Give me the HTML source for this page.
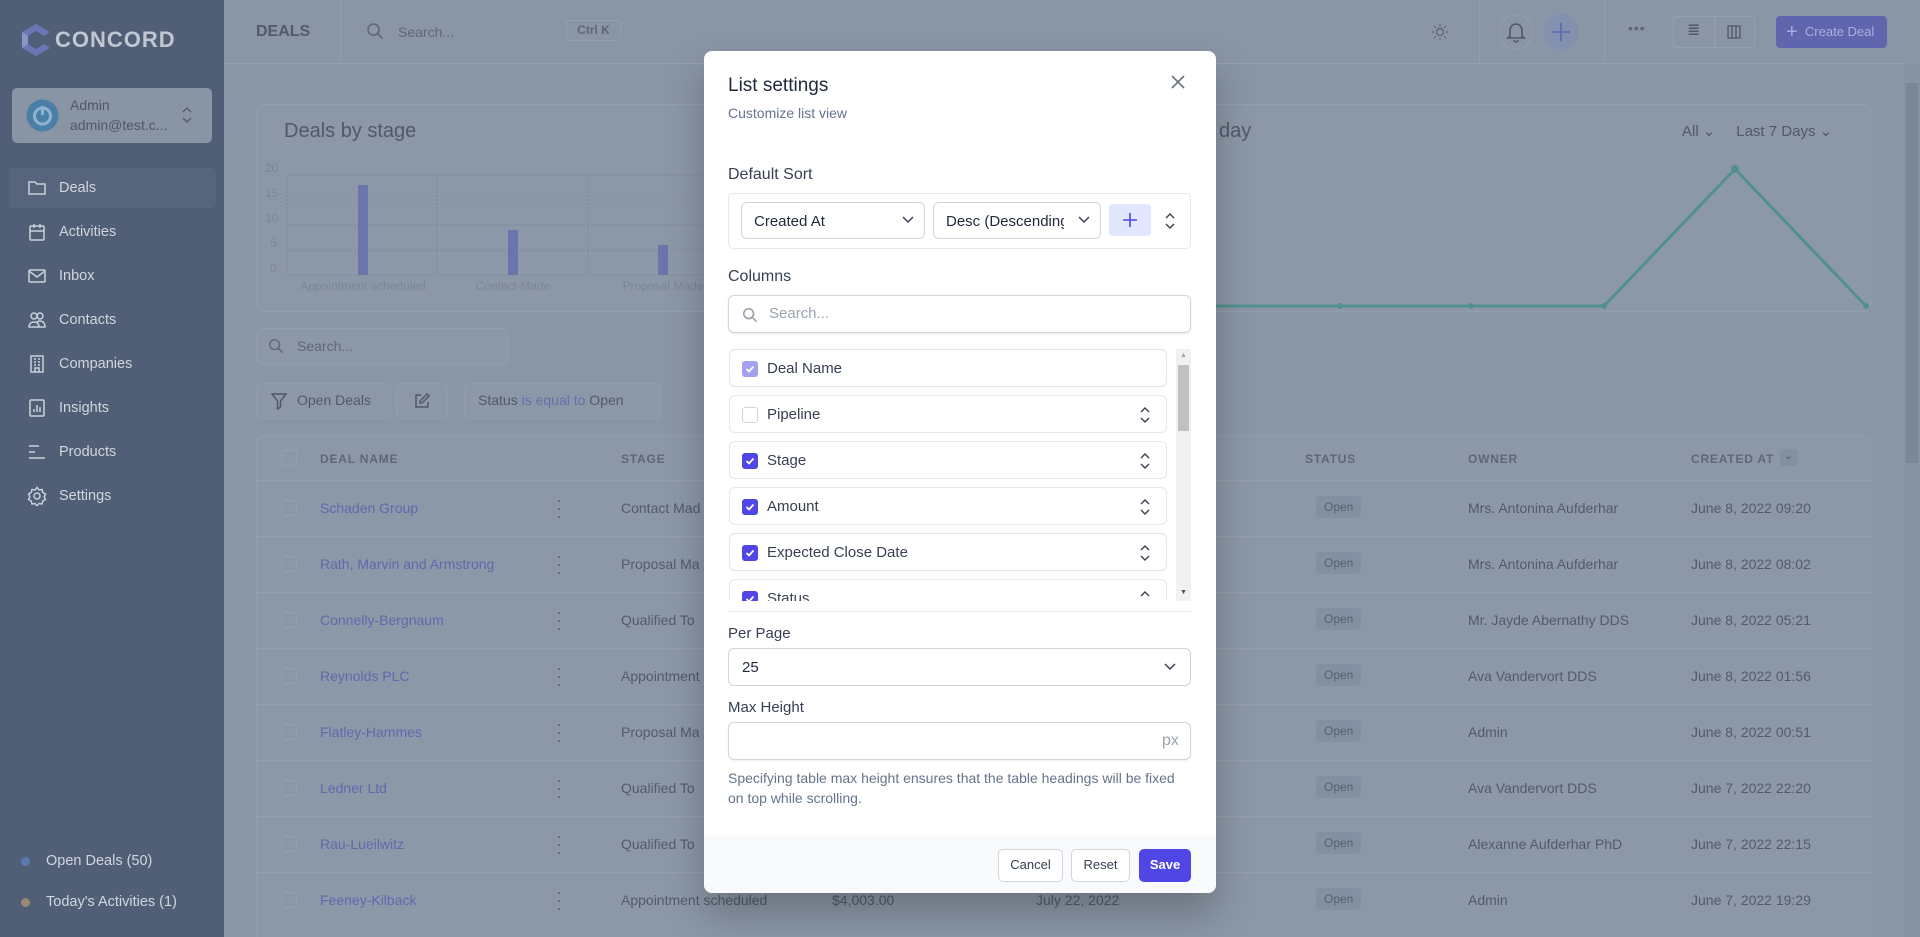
<!DOCTYPE html>
<html style="height:937px;overflow:hidden"><head><meta charset="utf-8">
<style>
*{box-sizing:border-box;margin:0;padding:0}
html,body{width:1920px;height:937px;overflow:hidden}
body{font-family:"Liberation Sans",Arial,sans-serif;background:#8a96a6;position:relative}
.clip{position:absolute;left:0;top:0;width:1920px;height:937px;overflow:hidden}
.a{position:absolute}
.side{left:0;top:0;width:224px;height:937px;background:#505e76}
.nav{left:27px;color:#d1d6de;font-size:14.5px;display:flex;align-items:center;gap:12px;height:22px}
.nav svg{width:20px;height:20px;stroke:#c9d0da;fill:none;stroke-width:1.5}
.top{left:224px;top:0;width:1680px;height:64px;border-bottom:1px solid #95a0af}
.card{background:#8c98a8;border:1px solid #929eae;border-radius:8px}
.row{left:256px;width:1615px;height:56px;border-top:1px solid #95a0af}
.badge{background:#8390a1;color:#565f6e;font-size:12px;padding:4px 8px;border-radius:4px}
.modal{left:704px;top:51px;width:512px;height:842px;background:#fff;border-radius:8px;overflow:hidden;box-shadow:0 20px 40px rgba(0,0,0,.25)}
.m{position:absolute;color:#1f2937}
.lbl{font-size:16px;color:#374151;font-weight:500}
.inp{border:1px solid #d1d5db;border-radius:6px;background:#fff}
.item{left:25px;width:438px;height:38px;border:1px solid #e5e7eb;border-radius:6px;font-size:15px;color:#374151}
.cb{position:absolute;left:12px;top:11px;width:16px;height:16px;border-radius:3px;background:#4f46e5}
.cb svg{position:absolute;left:2px;top:2px}
.ud{position:absolute;right:16px;top:11px}
.btn{border:1px solid #d1d5db;border-radius:5px;background:#fff;font-size:13px;color:#374151;text-align:center;line-height:30px}
.t{font-size:14px;color:#515b6b}
</style></head><body><div class="clip">

<div class="a side"></div>
<svg class="a" style="left:18px;top:22px" width="36" height="36" viewBox="0 0 36 36"><path d="M18 2 L32 10 L26 14 L18 9 L10 14 L10 22 L18 27 L26 22 L32 26 L18 34 L4 26 L4 10Z" fill="#6a76b5"/><path d="M4 10 L10 14 L10 22 L4 26Z" fill="#8b97c9"/></svg>
<div class="a" style="left:55px;top:27px;font-size:22px;font-weight:bold;letter-spacing:1px;color:#c0c7d2">CONCORD</div>
<div class="a" style="left:12px;top:88px;width:200px;height:55px;background:#8995a5;border-radius:5px"></div>
<svg class="a" style="left:26px;top:99px" width="33" height="33" viewBox="0 0 33 33"><circle cx="16.5" cy="16.5" r="16" fill="#4a7fa8"/><circle cx="16.5" cy="17" r="8" fill="none" stroke="#8fb2cf" stroke-width="3"/><line x1="16.5" y1="7" x2="16.5" y2="16" stroke="#8fb2cf" stroke-width="3"/></svg>
<div class="a" style="left:70px;top:97px;font-size:14px;color:#4e5868">Admin</div>
<div class="a" style="left:70px;top:117px;font-size:14px;color:#4e5868">admin@test.c...</div>
<svg class="a" style="left:182px;top:107px" width="10" height="16" viewBox="0 0 10 16" fill="none" stroke="#4e5868" stroke-width="1.3"><path d="M1 5l4-4 4 4M1 11l4 4 4-4"/></svg>
<div class="a" style="left:9px;top:168px;width:207px;height:40px;background:#56647c;border-radius:5px"></div>
<div class="a nav" style="top:177px"><svg viewBox="0 0 20 20"><path d="M2 4h6l2 2h8v10H2z"/></svg>Deals</div>
<div class="a nav" style="top:221px"><svg viewBox="0 0 20 20"><rect x="3" y="4" width="14" height="14" rx="1"/><path d="M7 2v4M13 2v4M3 9h14"/></svg>Activities</div>
<div class="a nav" style="top:265px"><svg viewBox="0 0 20 20"><rect x="2" y="4" width="16" height="12" rx="1"/><path d="M2 5l8 6 8-6"/></svg>Inbox</div>
<div class="a nav" style="top:309px"><svg viewBox="0 0 20 20"><circle cx="7" cy="6" r="3"/><circle cx="13" cy="6" r="3"/><path d="M2 17c0-4 3-5 5-5s5 1 5 5zM10 12c1-1 2-1 3-1 2 0 5 1 5 6h-6"/></svg>Contacts</div>
<div class="a nav" style="top:353px"><svg viewBox="0 0 20 20"><rect x="4" y="2" width="12" height="16"/><path d="M7 5h2M11 5h2M7 8h2M11 8h2M7 11h2M11 11h2M8 18v-4h4v4"/></svg>Companies</div>
<div class="a nav" style="top:397px"><svg viewBox="0 0 20 20"><rect x="3" y="2" width="14" height="16" rx="1"/><path d="M7 14v-3M10 14V7M13 14v-5"/></svg>Insights</div>
<div class="a nav" style="top:441px"><svg viewBox="0 0 20 20"><path d="M2 4h10M2 10h6M2 16h16"/></svg>Products</div>
<div class="a nav" style="top:485px"><svg viewBox="0 0 20 20"><circle cx="10" cy="10" r="3"/><path d="M10 1.5l2 2.5 3-.5.8 3 2.7 1.5-1.3 2.8 1.3 2.7-2.7 1.5-.8 3-3-.5-2 2.5-2-2.5-3 .5-.8-3-2.7-1.5 1.3-2.7L1.5 8l2.7-1.5.8-3 3 .5z"/></svg>Settings</div>
<div class="a" style="left:21px;top:857px;width:9px;height:9px;border-radius:50%;background:#5b78b0"></div>
<div class="a" style="left:46px;top:853px;font-size:14.5px;color:#d1d6de">Open Deals (50)</div>
<div class="a" style="left:21px;top:898px;width:9px;height:9px;border-radius:50%;background:#9a8a73"></div>
<div class="a" style="left:46px;top:894px;font-size:14.5px;color:#d1d6de">Today's Activities (1)</div>

<div class="a top"></div>
<div class="a" style="left:256px;top:23px;font-size:16px;font-weight:bold;color:#515b6b">DEALS</div>
<div class="a" style="left:340px;top:0;width:1px;height:64px;background:#95a0af"></div>
<svg class="a" style="left:366px;top:22px" width="18" height="18" viewBox="0 0 18 18" fill="none" stroke="#5d6777" stroke-width="1.6"><circle cx="7.5" cy="7.5" r="5.5"/><path d="M11.5 11.5l5 5"/></svg>
<div class="a" style="left:398px;top:24px;font-size:14px;color:#5d6777">Search...</div>
<div class="a" style="left:566px;top:20px;width:55px;height:21px;border:1px solid #96a1b0;border-radius:4px;font-size:12px;font-weight:bold;color:#5d6777;text-align:center;line-height:19px">Ctrl K</div>
<svg class="a" style="left:1430px;top:22px" width="20" height="20" viewBox="0 0 20 20" fill="none" stroke="#5d6777" stroke-width="1.4"><circle cx="10" cy="10" r="3.5"/><path d="M10 2v2M10 16v2M2 10h2M16 10h2M4.3 4.3l1.4 1.4M14.3 14.3l1.4 1.4M4.3 15.7l1.4-1.4M14.3 5.7l1.4-1.4"/></svg>
<div class="a" style="left:1479px;top:0;width:1px;height:64px;background:#95a0af"></div>
<div class="a" style="left:1499px;top:14px;width:34px;height:36px;border-radius:50%;border:1px solid #96a1b0"></div>
<svg class="a" style="left:1506px;top:21px" width="20" height="22" viewBox="0 0 20 22" fill="none" stroke="#4f5968" stroke-width="1.6"><path d="M4 15V9a6 6 0 0112 0v6l2 2H2z"/><path d="M8 19a2 2 0 004 0"/></svg>
<div class="a" style="left:1544px;top:14px;width:34px;height:36px;border-radius:50%;background:#8390ae"></div>
<svg class="a" style="left:1551px;top:22px" width="20" height="20" viewBox="0 0 20 20" stroke="#5d67b5" stroke-width="1.6"><path d="M10 1v18M1 10h18"/></svg>
<div class="a" style="left:1604px;top:0;width:1px;height:64px;background:#95a0af"></div>
<div class="a" style="left:1628px;top:20px;font-size:14px;color:#5d6777;letter-spacing:1px">•••</div>
<div class="a" style="left:1673px;top:16px;width:82px;height:32px;border:1px solid #96a1b0;border-radius:4px"></div>
<div class="a" style="left:1714px;top:16px;width:1px;height:32px;background:#96a1b0"></div>
<div class="a" style="left:1687px;top:20px;font-size:16px;color:#4f5968">≣</div>
<svg class="a" style="left:1727px;top:25px" width="14" height="14" viewBox="0 0 14 14" fill="none" stroke="#4f5968" stroke-width="1.3"><rect x="1" y="1" width="12" height="12"/><path d="M5 1v12M9 1v12"/></svg>
<div class="a" style="left:1776px;top:16px;width:111px;height:32px;background:#5f66ad;border-radius:4px;color:#a9aee0;font-size:13px;line-height:32px;padding-left:10px"><span style="font-size:20px;vertical-align:-2px">+</span>&nbsp; Create Deal</div>

<div class="a" style="left:1904px;top:64px;width:16px;height:873px;background:#8793a3"></div>
<div class="a" style="left:1906px;top:83px;width:12px;height:380px;background:#7b8696"></div>

<div class="a card" style="left:256px;top:104px;width:800px;height:208px"></div>
<div class="a card" style="left:1070px;top:104px;width:801px;height:208px"></div>
<div class="a" style="left:284px;top:120px;font-size:20px;color:#4f5968">Deals by stage</div>
<div class="a" style="left:1219px;top:120px;font-size:20px;color:#4f5968">day</div>
<div class="a" style="left:1682px;top:122px;font-size:15px;color:#4f5968">All ⌄&nbsp;&nbsp;&nbsp;&nbsp; Last 7 Days ⌄</div>
<svg class="a" style="left:256px;top:160px" width="460" height="140">
<g stroke="#7d8898" stroke-dasharray="2 2" fill="none"><path d="M31 15H460M31 40H460M31 65H460M31 90H460M31 115H460M31 15V115M181 15V115M332 15V115"/></g>
<g fill="#6a75ad"><rect x="102" y="25" width="10" height="90"/><rect x="252" y="70" width="10" height="45"/><rect x="402" y="85" width="10" height="30"/></g>
<g fill="#7b8696" font-size="12" font-family="Liberation Sans"><text x="9" y="12">20</text><text x="9" y="37">15</text><text x="9" y="62">10</text><text x="14" y="87">5</text><text x="14" y="112">0</text>
<text x="107" y="130" text-anchor="middle">Appointment scheduled</text><text x="257" y="130" text-anchor="middle">Contact Made</text><text x="407" y="130" text-anchor="middle">Proposal Made</text></g></svg>
<svg class="a" style="left:1216px;top:150px" width="660" height="170"><polyline points="0,156 124,156 255,156 388,156 519,19 650,156" fill="none" stroke="#52908e" stroke-width="3"/><g fill="#52908e"><circle cx="124" cy="156" r="3"/><circle cx="255" cy="156" r="3"/><circle cx="388" cy="156" r="3"/><circle cx="519" cy="19" r="4"/><circle cx="650" cy="156" r="3"/></g></svg>

<div class="a card" style="left:256px;top:328px;width:252px;height:37px;border-radius:6px"></div>
<svg class="a" style="left:268px;top:338px" width="16" height="16" viewBox="0 0 18 18" fill="none" stroke="#5d6777" stroke-width="1.6"><circle cx="7.5" cy="7.5" r="5.5"/><path d="M11.5 11.5l5 5"/></svg>
<div class="a" style="left:297px;top:338px;font-size:14px;color:#5d6777">Search...</div>
<div class="a card" style="left:256px;top:383px;width:135px;height:36px;border-radius:6px"></div>
<svg class="a" style="left:270px;top:392px" width="18" height="18" viewBox="0 0 18 18" fill="none" stroke="#4f5968" stroke-width="1.5"><path d="M2 2h14l-5.5 7v6l-3 2V9z"/></svg>
<div class="a" style="left:297px;top:392px;font-size:14px;color:#4f5968">Open Deals</div>
<div class="a card" style="left:396px;top:383px;width:52px;height:36px;border-radius:6px"></div>
<svg class="a" style="left:413px;top:392px" width="18" height="18" viewBox="0 0 18 18" fill="none" stroke="#4f5968" stroke-width="1.5"><path d="M8 3H3v12h12v-5M14 2l2 2-7 7H7V9z"/></svg>
<div class="a card" style="left:464px;top:383px;width:197px;height:36px;border-radius:6px"></div>
<div class="a" style="left:478px;top:392px;font-size:14px;color:#4f5968">Status <span style="color:#6470ad">is equal to</span> Open</div>

<div class="a card" style="left:256px;top:435px;width:1615px;height:520px"></div>
<div class="a" style="left:281px;top:450px;width:16px;height:16px;border:1px solid #96a1b0;border-radius:3px"></div>
<div class="a" style="top:452px;left:320px;font-size:12px;font-weight:bold;letter-spacing:.8px;color:#5d6777">DEAL NAME</div>
<div class="a" style="top:452px;left:621px;font-size:12px;font-weight:bold;letter-spacing:.8px;color:#5d6777">STAGE</div>
<div class="a" style="top:452px;left:1305px;font-size:12px;font-weight:bold;letter-spacing:.8px;color:#5d6777">STATUS</div>
<div class="a" style="top:452px;left:1468px;font-size:12px;font-weight:bold;letter-spacing:.8px;color:#5d6777">OWNER</div>
<div class="a" style="top:452px;left:1691px;font-size:12px;font-weight:bold;letter-spacing:.8px;color:#5d6777">CREATED AT</div>
<div class="a" style="top:449px;left:1780px;width:17px;height:17px;background:#8390a1;border-radius:3px;font-size:11px;color:#4f5968;text-align:center;line-height:15px">⌄</div>

<div class="a row" style="top:480px"></div>
<div class="a row" style="top:536px"></div>
<div class="a row" style="top:592px"></div>
<div class="a row" style="top:648px"></div>
<div class="a row" style="top:704px"></div>
<div class="a row" style="top:760px"></div>
<div class="a row" style="top:816px"></div>
<div class="a row" style="top:872px;height:60px"></div>

<div class="t">
<div class="a" style="left:281px;top:500px;width:16px;height:16px;border:1px solid #96a1b0;border-radius:3px"></div><div class="a" style="left:320px;top:500px;color:#5f68ad">Schaden Group</div><div class="a" style="left:556px;top:496px;font-size:18px;line-height:8px;color:#5d6777">·<br>·<br>·</div><div class="a" style="left:621px;top:500px">Contact Mad</div><div class="a badge" style="left:1316px;top:496px">Open</div><div class="a" style="left:1468px;top:500px">Mrs. Antonina Aufderhar</div><div class="a" style="left:1691px;top:500px">June 8, 2022 09:20</div>
<div class="a" style="left:281px;top:556px;width:16px;height:16px;border:1px solid #96a1b0;border-radius:3px"></div><div class="a" style="left:320px;top:556px;color:#5f68ad">Rath, Marvin and Armstrong</div><div class="a" style="left:556px;top:552px;font-size:18px;line-height:8px;color:#5d6777">·<br>·<br>·</div><div class="a" style="left:621px;top:556px">Proposal Ma</div><div class="a badge" style="left:1316px;top:552px">Open</div><div class="a" style="left:1468px;top:556px">Mrs. Antonina Aufderhar</div><div class="a" style="left:1691px;top:556px">June 8, 2022 08:02</div>
<div class="a" style="left:281px;top:612px;width:16px;height:16px;border:1px solid #96a1b0;border-radius:3px"></div><div class="a" style="left:320px;top:612px;color:#5f68ad">Connelly-Bergnaum</div><div class="a" style="left:556px;top:608px;font-size:18px;line-height:8px;color:#5d6777">·<br>·<br>·</div><div class="a" style="left:621px;top:612px">Qualified To</div><div class="a badge" style="left:1316px;top:608px">Open</div><div class="a" style="left:1468px;top:612px">Mr. Jayde Abernathy DDS</div><div class="a" style="left:1691px;top:612px">June 8, 2022 05:21</div>
<div class="a" style="left:281px;top:668px;width:16px;height:16px;border:1px solid #96a1b0;border-radius:3px"></div><div class="a" style="left:320px;top:668px;color:#5f68ad">Reynolds PLC</div><div class="a" style="left:556px;top:664px;font-size:18px;line-height:8px;color:#5d6777">·<br>·<br>·</div><div class="a" style="left:621px;top:668px">Appointment</div><div class="a badge" style="left:1316px;top:664px">Open</div><div class="a" style="left:1468px;top:668px">Ava Vandervort DDS</div><div class="a" style="left:1691px;top:668px">June 8, 2022 01:56</div>
<div class="a" style="left:281px;top:724px;width:16px;height:16px;border:1px solid #96a1b0;border-radius:3px"></div><div class="a" style="left:320px;top:724px;color:#5f68ad">Flatley-Hammes</div><div class="a" style="left:556px;top:720px;font-size:18px;line-height:8px;color:#5d6777">·<br>·<br>·</div><div class="a" style="left:621px;top:724px">Proposal Ma</div><div class="a badge" style="left:1316px;top:720px">Open</div><div class="a" style="left:1468px;top:724px">Admin</div><div class="a" style="left:1691px;top:724px">June 8, 2022 00:51</div>
<div class="a" style="left:281px;top:780px;width:16px;height:16px;border:1px solid #96a1b0;border-radius:3px"></div><div class="a" style="left:320px;top:780px;color:#5f68ad">Ledner Ltd</div><div class="a" style="left:556px;top:776px;font-size:18px;line-height:8px;color:#5d6777">·<br>·<br>·</div><div class="a" style="left:621px;top:780px">Qualified To</div><div class="a badge" style="left:1316px;top:776px">Open</div><div class="a" style="left:1468px;top:780px">Ava Vandervort DDS</div><div class="a" style="left:1691px;top:780px">June 7, 2022 22:20</div>
<div class="a" style="left:281px;top:836px;width:16px;height:16px;border:1px solid #96a1b0;border-radius:3px"></div><div class="a" style="left:320px;top:836px;color:#5f68ad">Rau-Lueilwitz</div><div class="a" style="left:556px;top:832px;font-size:18px;line-height:8px;color:#5d6777">·<br>·<br>·</div><div class="a" style="left:621px;top:836px">Qualified To</div><div class="a badge" style="left:1316px;top:832px">Open</div><div class="a" style="left:1468px;top:836px">Alexanne Aufderhar PhD</div><div class="a" style="left:1691px;top:836px">June 7, 2022 22:15</div>
<div class="a" style="left:281px;top:892px;width:16px;height:16px;border:1px solid #96a1b0;border-radius:3px"></div><div class="a" style="left:320px;top:892px;color:#5f68ad">Feeney-Kilback</div><div class="a" style="left:556px;top:888px;font-size:18px;line-height:8px;color:#5d6777">·<br>·<br>·</div><div class="a" style="left:621px;top:892px">Appointment scheduled</div><div class="a" style="left:832px;top:892px">$4,003.00</div><div class="a" style="left:1036px;top:892px">July 22, 2022</div><div class="a badge" style="left:1316px;top:888px">Open</div><div class="a" style="left:1468px;top:892px">Admin</div><div class="a" style="left:1691px;top:892px">June 7, 2022 19:29</div>
</div>

<div class="a modal">
  <div class="m" style="left:24px;top:24px;font-size:19px;font-weight:500;color:#1f2937">List settings</div>
  <div class="m" style="left:24px;top:54px;font-size:14px;color:#64748b">Customize list view</div>
  <svg class="m" style="left:466px;top:23px" width="16" height="16" viewBox="0 0 16 16" stroke="#6b7280" stroke-width="1.6"><path d="M2 2l12 12M14 2L2 14"/></svg>
  <div class="m lbl" style="left:24px;top:115px">Default Sort</div>
  <div class="m" style="left:24px;top:142px;width:463px;height:56px;border:1px solid #e5e7eb;border-radius:5px"></div>
  <div class="m inp" style="left:37px;top:151px;width:184px;height:37px;font-size:15px;padding:10px 12px;color:#1f2937">Created At</div>
  <svg class="m" style="left:198px;top:165px" width="12" height="8" viewBox="0 0 12 8" fill="none" stroke="#374151" stroke-width="1.5"><path d="M1 1l5 5 5-5"/></svg>
  <div class="m inp" style="left:229px;top:151px;width:168px;height:37px;font-size:15px;padding:10px 12px;color:#1f2937;overflow:hidden;white-space:nowrap"><span style="display:inline-block;width:118px;overflow:hidden;vertical-align:top">Desc (Descending)</span></div>
  <svg class="m" style="left:374px;top:165px" width="12" height="8" viewBox="0 0 12 8" fill="none" stroke="#374151" stroke-width="1.5"><path d="M1 1l5 5 5-5"/></svg>
  <div class="m" style="left:405px;top:153px;width:42px;height:32px;background:#e0e7ff;border-radius:4px"></div>
  <svg class="m" style="left:418px;top:161px" width="16" height="16" viewBox="0 0 16 16" stroke="#4f46e5" stroke-width="1.6"><path d="M8 1v14M1 8h14"/></svg>
  <svg class="m" style="left:461px;top:162px" width="10" height="16" viewBox="0 0 10 16" fill="none" stroke="#374151" stroke-width="1.4"><path d="M1 5l4-4 4 4M1 11l4 4 4-4"/></svg>
  <div class="m lbl" style="left:24px;top:217px">Columns</div>
  <div class="m inp" style="left:24px;top:244px;width:463px;height:38px;box-shadow:0 1px 2px rgba(0,0,0,.08)"></div>
  <svg class="m" style="left:38px;top:256px" width="16" height="16" viewBox="0 0 18 18" fill="none" stroke="#9ca3af" stroke-width="1.8"><circle cx="7.5" cy="7.5" r="5.5"/><path d="M11.5 11.5l5 5"/></svg>
  <div class="m" style="left:65px;top:254px;font-size:15px;color:#9ca3af">Search...</div>

  <div style="position:absolute;left:0;top:298px;width:512px;height:252px;overflow:hidden">
    <div class="m item" style="top:0"><div class="cb" style="background:#a5a0f0"><svg width="12" height="12" viewBox="0 0 12 12" fill="none" stroke="#fff" stroke-width="1.8"><path d="M2.5 6l2.5 2.5 4.5-5"/></svg></div><span style="position:absolute;left:37px;top:10px">Deal Name</span></div>
    <div class="m item" style="top:46px"><div class="cb" style="background:#fff;border:1px solid #d1d5db"></div><span style="position:absolute;left:37px;top:10px">Pipeline</span><svg class="ud" width="10" height="16" viewBox="0 0 10 16" fill="none" stroke="#374151" stroke-width="1.4"><path d="M1 5l4-4 4 4M1 11l4 4 4-4"/></svg></div>
    <div class="m item" style="top:92px"><div class="cb"><svg width="12" height="12" viewBox="0 0 12 12" fill="none" stroke="#fff" stroke-width="1.8"><path d="M2.5 6l2.5 2.5 4.5-5"/></svg></div><span style="position:absolute;left:37px;top:10px">Stage</span><svg class="ud" width="10" height="16" viewBox="0 0 10 16" fill="none" stroke="#374151" stroke-width="1.4"><path d="M1 5l4-4 4 4M1 11l4 4 4-4"/></svg></div>
    <div class="m item" style="top:138px"><div class="cb"><svg width="12" height="12" viewBox="0 0 12 12" fill="none" stroke="#fff" stroke-width="1.8"><path d="M2.5 6l2.5 2.5 4.5-5"/></svg></div><span style="position:absolute;left:37px;top:10px">Amount</span><svg class="ud" width="10" height="16" viewBox="0 0 10 16" fill="none" stroke="#374151" stroke-width="1.4"><path d="M1 5l4-4 4 4M1 11l4 4 4-4"/></svg></div>
    <div class="m item" style="top:184px"><div class="cb"><svg width="12" height="12" viewBox="0 0 12 12" fill="none" stroke="#fff" stroke-width="1.8"><path d="M2.5 6l2.5 2.5 4.5-5"/></svg></div><span style="position:absolute;left:37px;top:10px">Expected Close Date</span><svg class="ud" width="10" height="16" viewBox="0 0 10 16" fill="none" stroke="#374151" stroke-width="1.4"><path d="M1 5l4-4 4 4M1 11l4 4 4-4"/></svg></div>
    <div class="m item" style="top:230px"><div class="cb"><svg width="12" height="12" viewBox="0 0 12 12" fill="none" stroke="#fff" stroke-width="1.8"><path d="M2.5 6l2.5 2.5 4.5-5"/></svg></div><span style="position:absolute;left:37px;top:10px">Status</span><svg class="ud" width="10" height="16" viewBox="0 0 10 16" fill="none" stroke="#374151" stroke-width="1.4"><path d="M1 5l4-4 4 4"/></svg></div>
    <div class="m" style="left:472px;top:0;width:15px;height:252px;background:#f1f1f1"></div>
    <div class="m" style="left:474px;top:16px;width:11px;height:66px;background:#c1c1c1"></div>
    <div class="m" style="left:476px;top:3px;font-size:7px;color:#a3a3a3">▲</div>
    <div class="m" style="left:476px;top:240px;font-size:7px;color:#505050">▼</div>
  </div>
  <div class="m" style="left:24px;top:560px;width:463px;height:1px;background:#e5e7eb"></div>
  <div class="m lbl" style="left:24px;top:574px;font-size:15px">Per Page</div>
  <div class="m inp" style="left:24px;top:597px;width:463px;height:38px;font-size:15px;padding:10px 13px;color:#1f2937">25</div>
  <svg class="m" style="left:460px;top:612px" width="12" height="8" viewBox="0 0 12 8" fill="none" stroke="#374151" stroke-width="1.5"><path d="M1 1l5 5 5-5"/></svg>
  <div class="m lbl" style="left:24px;top:648px;font-size:15px">Max Height</div>
  <div class="m inp" style="left:24px;top:671px;width:463px;height:38px;box-shadow:0 1px 2px rgba(0,0,0,.06)"></div>
  <div class="m" style="left:458px;top:681px;font-size:16px;color:#9ca3af">px</div>
  <div class="m" style="left:24px;top:717px;width:460px;font-size:14px;line-height:20px;color:#64748b">Specifying table max height ensures that the table headings will be fixed on top while scrolling.</div>
  <div class="m" style="left:0;top:785px;width:512px;height:57px;background:#f9fafb"></div>
  <div class="m btn" style="left:294px;top:798px;width:65px;height:33px">Cancel</div>
  <div class="m btn" style="left:367px;top:798px;width:59px;height:33px">Reset</div>
  <div class="m btn" style="left:435px;top:798px;width:52px;height:33px;background:#4f46e5;border-color:#4f46e5;color:#fff;font-weight:bold">Save</div>
</div>
</div></body></html>
